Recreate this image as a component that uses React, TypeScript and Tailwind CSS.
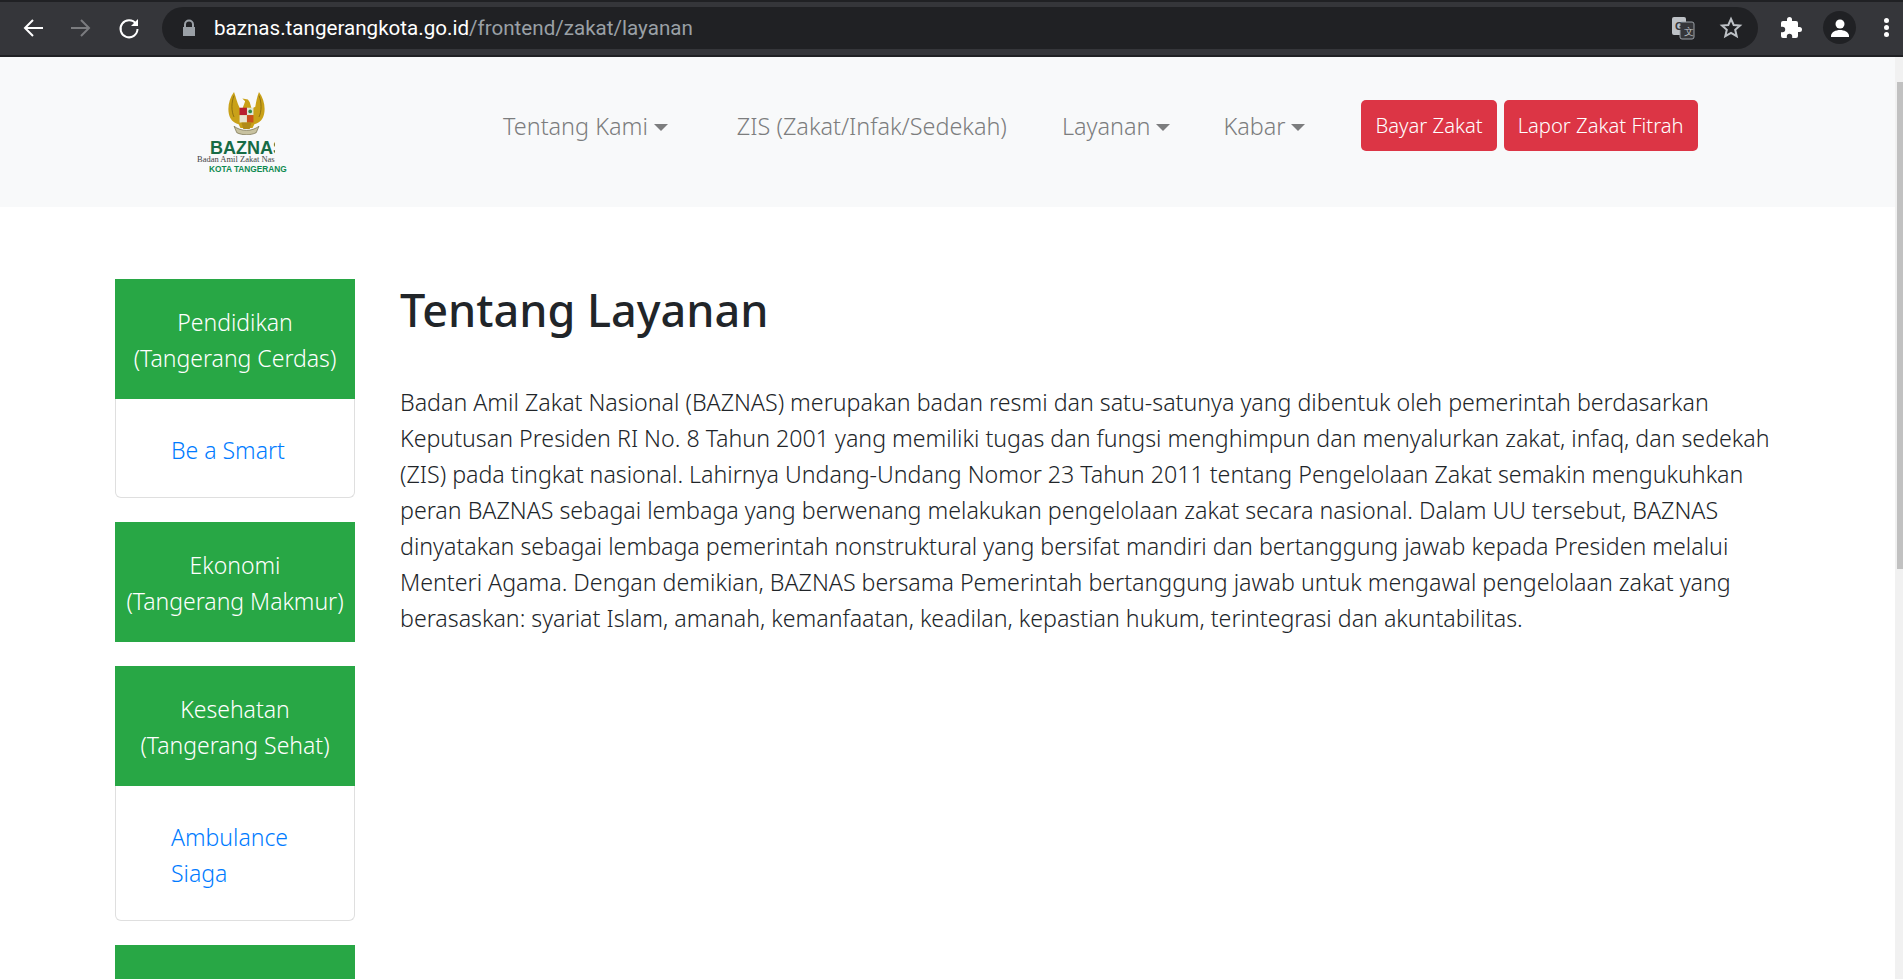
const FONT = "font-['Noto_Sans',sans-serif] font-[350]";

const ChromeBar = () => (
  <div className="h-[57px] bg-[#35363a] border-b-2 border-[#202124] flex items-center relative">
    <div className="absolute top-0 left-0 right-0 h-[2px] bg-[#202124]" />
    <svg width="24" height="24" viewBox="0 0 24 24" className="ml-[21px]" fill="none" stroke="#fff" strokeWidth="2"><path d="M22 12H4M12 4l-8 8 8 8" /></svg>
    <svg width="24" height="24" viewBox="0 0 24 24" className="ml-[24px]" fill="none" stroke="#7b7c7f" strokeWidth="2"><path d="M2 12h18M12 4l8 8-8 8" /></svg>
    <svg width="24" height="24" viewBox="0 0 24 24" className="ml-[24px]" fill="none" stroke="#fff" strokeWidth="2"><path d="M19 8a8.5 8.5 0 1 0 1.5 5" /><path d="M21 3v7h-7z" fill="#fff" stroke="none" /></svg>
    <div className="ml-[21px] w-[1596px] h-[42px] rounded-full bg-[#202124] flex items-center pl-[19px] pr-[15px] text-[20.6px] font-normal font-['Roboto',sans-serif]">
      <svg width="16" height="18" viewBox="0 0 16 18" fill="#9aa0a6"><path d="M3 8V5.5a5 5 0 0 1 10 0V8h1v9H2V8zm2 0h6V5.5a3 3 0 0 0-6 0z" /></svg>
      <span className="ml-[17px] mt-[1px] text-white">baznas.tangerangkota.go.id</span>
      <span className="mt-[1px] text-[#9aa0a6]">/frontend/zakat/layanan</span>
      <div className="ml-auto flex items-center gap-[24px]">
        <svg width="24" height="24" viewBox="0 0 24 24"><rect x="1" y="1" width="14" height="18" rx="2" fill="#bdc1c6" /><rect x="9" y="6" width="14" height="17" rx="2" fill="#35363a" stroke="#9aa0a6" /><text x="4" y="14" fontSize="11" fontWeight="700" fill="#35363a" fontFamily="Liberation Sans">G</text><text x="13" y="19" fontSize="10" fill="#bdc1c6" fontFamily="Liberation Sans">文</text></svg>
        <svg width="24" height="24" viewBox="0 0 24 24" fill="none" stroke="#bdc1c6" strokeWidth="2"><path d="M12 3l2.7 6 6.3.6-4.8 4.2 1.5 6.4-5.7-3.4-5.7 3.4 1.5-6.4L3 9.6 9.3 9z" /></svg>
      </div>
    </div>
    <svg width="24" height="24" viewBox="0 0 24 24" fill="#fff" className="ml-[21px]"><path d="M20.5 11H19V7a2 2 0 0 0-2-2h-4V3.5a2.5 2.5 0 0 0-5 0V5H4a2 2 0 0 0-2 2v3.8h1.5a2.7 2.7 0 0 1 0 5.4H2V20a2 2 0 0 0 2 2h3.8v-1.5a2.7 2.7 0 0 1 5.4 0V22H17a2 2 0 0 0 2-2v-4h1.5a2.5 2.5 0 0 0 0-5z" /></svg>
    <div className="ml-[20px] w-[33px] h-[33px] rounded-full bg-[#202124] flex items-center justify-center">
      <svg width="24" height="24" viewBox="0 0 24 24" fill="#fff"><circle cx="12" cy="8" r="4.5" /><path d="M3 20c0-4 5-6 9-6s9 2 9 6v1H3z" /></svg>
    </div>
    <div className="ml-[28px] flex flex-col gap-[2px]">
      <div className="w-[5px] h-[5px] rounded-full bg-white" />
      <div className="w-[5px] h-[5px] rounded-full bg-white" />
      <div className="w-[5px] h-[5px] rounded-full bg-white" />
    </div>
  </div>
);

const Logo = () => (
  <div className="w-[90px] h-[80px] flex flex-col items-start font-normal">
    <svg width="41" height="47" viewBox="0 0 41 47" className="ml-[29px]">
      <path d="M7 0C1 8-1 20 3 28c2 4 6 6 9 7l2 4h13l2-4c3-1 7-3 9-7 4-8 2-20-4-28-2 5-3 10-4 16l-4 2-2-7-2-3-6-1 3 3-1 3-2 5-3-1C10 11 9 5 7 0z" fill="#c9a118" />
      <path d="M7 4C4 11 4 21 7 27M34 4c3 7 3 17 0 23" stroke="#8a6d10" strokeWidth="1" fill="none" />
      <rect x="13" y="17" width="8" height="8" fill="#b81f2e" />
      <rect x="21" y="17" width="7" height="8" fill="#dfe6d8" />
      <rect x="13" y="25" width="8" height="8" fill="#e8e4d0" />
      <rect x="21" y="25" width="7" height="8" fill="#c9501c" />
      <circle cx="24.5" cy="21" r="2" fill="#2e8b4a" />
      <path d="M15 33h11l-2 7h-7z" fill="#b08a18" />
      <path d="M7 37c8 6 19 6 27 0l-3 7c-6 3-15 3-21 0z" fill="#c8c2a0" stroke="#6c6440" strokeWidth="0.7" />
    </svg>
    <div className="mt-[5px] ml-[13px] w-[65px] overflow-hidden text-[#176b45] text-[18px] leading-[16px] font-bold font-['Liberation_Sans',sans-serif] whitespace-nowrap">BAZNAS</div>
    <div className="w-[78px] overflow-hidden text-[#444] text-[8.5px] leading-[9px] font-['Liberation_Serif',serif] whitespace-nowrap">Badan Amil Zakat Nasional</div>
    <div className="ml-[12px] mt-[1px] w-[78px] overflow-hidden text-[#0f8a50] text-[8.3px] leading-[8px] font-bold font-['Liberation_Sans',sans-serif] whitespace-nowrap">KOTA TANGERANG</div>
  </div>
);

const Caret = () => (
  <span className="inline-block ml-[6px] align-[4px] border-t-[7px] border-x-[7px] border-x-transparent border-t-[#7c7d7e]" />
);

const Nav = () => (
  <nav className="h-[150px] bg-[#f8f9fa] flex items-center text-[23.4px] text-[#7c7d7e]">
    <div className="ml-[197px]"><Logo /></div>
    <span className="ml-[216px] mt-[-11px]">Tentang Kami<Caret /></span>
    <span className="ml-[69px] mt-[-11px]">ZIS (Zakat/Infak/Sedekah)</span>
    <span className="ml-[55px] mt-[-11px]">Layanan<Caret /></span>
    <span className="ml-[53px] mt-[-11px]">Kabar<Caret /></span>
    <div className="ml-[56px] mt-[-13px] flex gap-[7px]">
      <span className="h-[51px] px-[14px] flex items-center bg-[#dc3545] text-white rounded-[5px] text-[20.2px]">Bayar Zakat</span>
      <span className="h-[51px] px-[14px] flex items-center bg-[#dc3545] text-white rounded-[5px] text-[20.2px]">Lapor Zakat Fitrah</span>
    </div>
  </nav>
);

const Card = ({ title, sub, link }: { title: string; sub: string; link?: string }) => (
  <div className="mb-[24px] w-[240px]">
    <div className="bg-[#28a745] text-white text-center h-[120px] flex flex-col justify-center pt-[2px] text-[23px] leading-[36px]">
      <span>{title}</span>
      <span>{sub}</span>
    </div>
    {link && (
      <div className="border border-t-0 border-[#dfdfdf] rounded-b-[6px] pl-[55px] pr-[36px] pt-[33px] pb-[29px] text-[23px] leading-[36px] text-[#007bff]">
        {link}
      </div>
    )}
  </div>
);

export default function App() {
  return (
    <div className={`h-[979px] overflow-hidden bg-white relative ${FONT}`}>
      <ChromeBar />
      <Nav />
      <div className="flex pt-[72px] pl-[115px]">
        <div className="w-[240px]">
          <Card title="Pendidikan" sub="(Tangerang Cerdas)" link="Be a Smart" />
          <Card title="Ekonomi" sub="(Tangerang Makmur)" />
          <Card title="Kesehatan" sub="(Tangerang Sehat)" link="Ambulance Siaga" />
          <Card title="" sub="" />
        </div>
        <div className="ml-[45px] w-[1390px]">
          <h1 className="mt-[4px] text-[45px] leading-[54px] font-medium text-[#212529] mb-[47px]">Tentang Layanan</h1>
          <p className="text-[23.2px] leading-[36px] text-[#212529]">
            Badan Amil Zakat Nasional (BAZNAS) merupakan badan resmi dan satu-satunya yang dibentuk oleh pemerintah berdasarkan Keputusan Presiden RI No. 8 Tahun 2001 yang memiliki tugas dan fungsi menghimpun dan menyalurkan zakat, infaq, dan sedekah (ZIS) pada tingkat nasional. Lahirnya Undang-Undang Nomor 23 Tahun 2011 tentang Pengelolaan Zakat semakin mengukuhkan peran BAZNAS sebagai lembaga yang berwenang melakukan pengelolaan zakat secara nasional. Dalam UU tersebut, BAZNAS dinyatakan sebagai lembaga pemerintah nonstruktural yang bersifat mandiri dan bertanggung jawab kepada Presiden melalui Menteri Agama. Dengan demikian, BAZNAS bersama Pemerintah bertanggung jawab untuk mengawal pengelolaan zakat yang berasaskan: syariat Islam, amanah, kemanfaatan, keadilan, kepastian hukum, terintegrasi dan akuntabilitas.
          </p>
        </div>
      </div>
      <div className="absolute right-0 top-[57px] bottom-0 w-[8px] bg-[#f1f1f1]">
        <div className="ml-[2px] mt-[25px] h-[487px] bg-[#c1c1c1]" />
      </div>
    </div>
  );
}
